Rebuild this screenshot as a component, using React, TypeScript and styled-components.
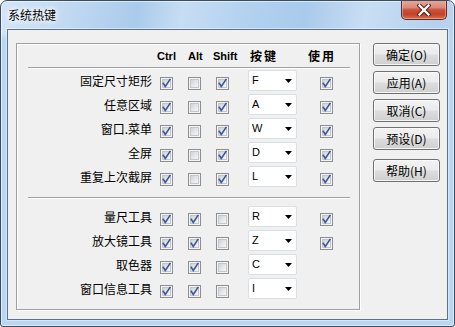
import React from 'react';
import styled, { createGlobalStyle } from 'styled-components';

const GlobalStyle = createGlobalStyle`
  html, body { margin: 0; padding: 0; background: #ffffff; }
  body { font-family: "Noto Sans CJK SC", "Liberation Sans", sans-serif; }
  * { box-sizing: border-box; }
`;

const Window = styled.div`
  width: 455px;
  height: 327px;
  border: 1px solid #3a4c60;
  border-radius: 7px 7px 3px 3px;
  background:
    linear-gradient(180deg, rgba(255,255,255,0) 0%, rgba(255,255,255,0) 10%, #b9d6f2 12%, #b9d6f2 100%),
    linear-gradient(100deg, #d3e5f7 0%, #c3dbf2 12%, #aacbeb 27%, #c6ddf3 36%, #b3d2f0 48%, #a9caeb 60%, #c8def4 72%, #b4d1ee 86%, #c9def3 100%);
  box-shadow: inset 0 0 0 1px rgba(255, 255, 255, 0.55);
  padding: 0 6px 6px 6px;
  display: flex;
  flex-direction: column;
  overflow: hidden;
`;

const TitleBar = styled.div`
  height: 28px;
  flex: none;
  display: flex;
  justify-content: space-between;
  align-items: flex-start;
`;

const TitleText = styled.div`
  margin-top: 7px;
  padding-left: 1px;
  font-size: 12px;
  line-height: 14px;
  color: #000;
  text-shadow: 0 0 4px #fff, 0 0 6px #fff, 0 0 8px rgba(255,255,255,0.8);
`;

const CloseButton = styled.div`
  width: 46px;
  height: 20px;
  margin-top: -1px;
  margin-right: 1px;
  border: 1px solid #5e2a22;
  border-top: none;
  border-radius: 0 0 5px 5px;
  background: linear-gradient(180deg, #e9aa9c 0%, #dc8877 40%, #c9503a 52%, #c3412b 75%, #d8704f 100%);
  box-shadow: inset 0 0 0 1px rgba(255, 210, 200, 0.45);
  display: flex;
  align-items: center;
  justify-content: center;
`;

const Client = styled.div`
  flex: 1;
  background: #f0f0f0;
  border: 1px solid #5e7086;
  box-shadow: 0 0 0 1px rgba(255, 255, 255, 0.45);
  display: flex;
  align-items: flex-start;
  padding: 13px 0 0 8px;
`;

const GroupBox = styled.div`
  width: 344px;
  height: 267px;
  border: 1px solid #a0a0a0;
  box-shadow: inset 1px 1px 0 #ffffff, 1px 1px 0 #ffffff;
  padding: 0 9px 0 11px;
  display: flex;
  flex-direction: column;
`;

const gridCols = `132px 28px 28px 32px 72px 30px`;

const HeaderRow = styled.div`
  display: grid;
  grid-template-columns: ${gridCols};
  height: 23px;
  align-items: center;
`;

const HeaderCell = styled.div<{ $offset: number; $cjk?: boolean }>`
  grid-column: ${(p) => 'auto'};
  justify-self: start;
  margin-left: ${(p) => p.$offset}px;
  white-space: nowrap;
  font-weight: bold;
  color: #000;
  font-family: ${(p) => (p.$cjk ? '"Noto Sans CJK SC", sans-serif' : '"Liberation Sans", Arial, sans-serif')};
  font-size: ${(p) => (p.$cjk ? '12px' : '11px')};
  letter-spacing: ${(p) => (p.$cjk ? '2px' : '0')};
  line-height: 14px;
`;

const Separator = styled.div<{ $top: number; $bottom: number }>`
  height: 2px;
  border-top: 1px solid #a0a0a0;
  border-bottom: 1px solid #ffffff;
  margin-top: ${(p) => p.$top}px;
  margin-bottom: ${(p) => p.$bottom}px;
`;

const Row = styled.div`
  display: grid;
  grid-template-columns: ${gridCols};
  height: 24px;
  align-items: start;
`;

const Label = styled.div`
  text-align: right;
  padding-right: 8px;
  margin-top: 5px;
  font-size: 12px;
  line-height: 14px;
  color: #000;
  white-space: nowrap;
`;

const CheckBox = styled.span`
  display: block;
  width: 13px;
  height: 13px;
  margin-top: 8px;
  border: 1px solid #8e8f8f;
  background: #f4f4f4;
  position: relative;
`;

const CheckInner = styled.span`
  position: absolute;
  left: 1px;
  top: 1px;
  width: 9px;
  height: 9px;
  border: 1px solid #c3c7cd;
  background: linear-gradient(135deg, #d0d4d9 0%, #e6e7e9 55%, #f7f7f7 100%);
`;

const CheckMark = styled.svg`
  position: absolute;
  left: 0;
  top: 0;
`;

const Empty = styled.span`
  display: block;
`;

const Combo = styled.div`
  width: 49px;
  height: 21px;
  margin-top: 1px;
  background: #ffffff;
  border: 1px solid #dadfe6;
  border-radius: 2px;
  display: flex;
  align-items: center;
  justify-content: space-between;
  padding: 0 4px 0 3px;
  font-family: "Liberation Sans", Arial, sans-serif;
  font-size: 11px;
  line-height: 12px;
  color: #000;
`;

const ComboText = styled.span`
  margin-top: -2px;
`;

const ButtonColumn = styled.div`
  margin-left: 13px;
  display: flex;
  flex-direction: column;
`;

const Button = styled.div<{ $gap: number }>`
  width: 67px;
  height: 23px;
  margin-top: ${(p) => p.$gap}px;
  border: 1px solid #707070;
  border-radius: 3px;
  background: linear-gradient(180deg, #f2f2f2 0%, #ebebeb 48%, #dddddd 52%, #cfcfcf 100%);
  box-shadow: inset 0 0 0 1px rgba(252, 252, 252, 0.8);
  display: flex;
  align-items: center;
  justify-content: center;
  font-size: 12px;
  line-height: 14px;
  color: #000;
`;

type RowData = {
  label: string;
  ctrl: boolean;
  alt: boolean;
  shift: boolean;
  key: string;
  use: boolean | null;
};

const group1: RowData[] = [
  { label: '固定尺寸矩形', ctrl: true, alt: false, shift: true, key: 'F', use: true },
  { label: '任意区域', ctrl: true, alt: false, shift: true, key: 'A', use: true },
  { label: '窗口.菜单', ctrl: true, alt: false, shift: true, key: 'W', use: true },
  { label: '全屏', ctrl: true, alt: false, shift: true, key: 'D', use: true },
  { label: '重复上次截屏', ctrl: true, alt: false, shift: true, key: 'L', use: true },
];

const group2: RowData[] = [
  { label: '量尺工具', ctrl: true, alt: true, shift: false, key: 'R', use: true },
  { label: '放大镜工具', ctrl: true, alt: true, shift: false, key: 'Z', use: true },
  { label: '取色器', ctrl: true, alt: true, shift: false, key: 'C', use: null },
  { label: '窗口信息工具', ctrl: true, alt: true, shift: false, key: 'I', use: null },
];

const Check: React.FC<{ checked: boolean }> = ({ checked }) => (
  <CheckBox>
    <CheckInner />
    {checked && (
      <CheckMark width="11" height="11" viewBox="0 0 11 11">
        <path d="M2.3 5.4 L4.3 8.4 L8.9 1.6" fill="none" stroke="#3f5a9c" strokeWidth="1.7" strokeLinecap="square" strokeLinejoin="miter" />
      </CheckMark>
    )}
  </CheckBox>
);

const KeyCombo: React.FC<{ value: string }> = ({ value }) => (
  <Combo>
    <ComboText>{value}</ComboText>
    <svg width="7" height="4" viewBox="0 0 7 4">
      <path d="M0 0 H7 L3.5 4 Z" fill="#000" />
    </svg>
  </Combo>
);

const HotkeyRow: React.FC<{ row: RowData }> = ({ row }) => (
  <Row>
    <Label>{row.label}</Label>
    <Check checked={row.ctrl} />
    <Check checked={row.alt} />
    <Check checked={row.shift} />
    <KeyCombo value={row.key} />
    {row.use === null ? <Empty /> : <Check checked={row.use} />}
  </Row>
);

const buttons = [
  { text: '确定(O)', gap: 0 },
  { text: '应用(A)', gap: 5 },
  { text: '取消(C)', gap: 5 },
  { text: '预设(D)', gap: 5 },
  { text: '帮助(H)', gap: 9 },
];

export default function App() {
  return (
    <>
      <GlobalStyle />
      <Window>
        <TitleBar>
          <TitleText>系统热键</TitleText>
          <CloseButton>
            <svg width="14" height="12" viewBox="0 0 14 12">
              <path d="M2.5 1.5 L11.5 10.5 M11.5 1.5 L2.5 10.5" stroke="#4a1d16" strokeWidth="4.2" strokeLinecap="square" />
              <path d="M2.5 1.5 L11.5 10.5 M11.5 1.5 L2.5 10.5" stroke="#ffffff" strokeWidth="2.3" strokeLinecap="square" />
            </svg>
          </CloseButton>
        </TitleBar>
        <Client>
          <GroupBox>
            <HeaderRow>
              <span />
              <HeaderCell $offset={-3}>Ctrl</HeaderCell>
              <HeaderCell $offset={0}>Alt</HeaderCell>
              <HeaderCell $offset={-3}>Shift</HeaderCell>
              <HeaderCell $offset={2} $cjk>按键</HeaderCell>
              <HeaderCell $offset={-12} $cjk>使用</HeaderCell>
            </HeaderRow>
            <Separator $top={0} $bottom={0} />
            {group1.map((r) => (
              <HotkeyRow key={r.label} row={r} />
            ))}
            <Separator $top={8} $bottom={6} />
            {group2.map((r) => (
              <HotkeyRow key={r.label} row={r} />
            ))}
          </GroupBox>
          <ButtonColumn>
            {buttons.map((b) => (
              <Button key={b.text} $gap={b.gap}>{b.text}</Button>
            ))}
          </ButtonColumn>
        </Client>
      </Window>
    </>
  );
}
